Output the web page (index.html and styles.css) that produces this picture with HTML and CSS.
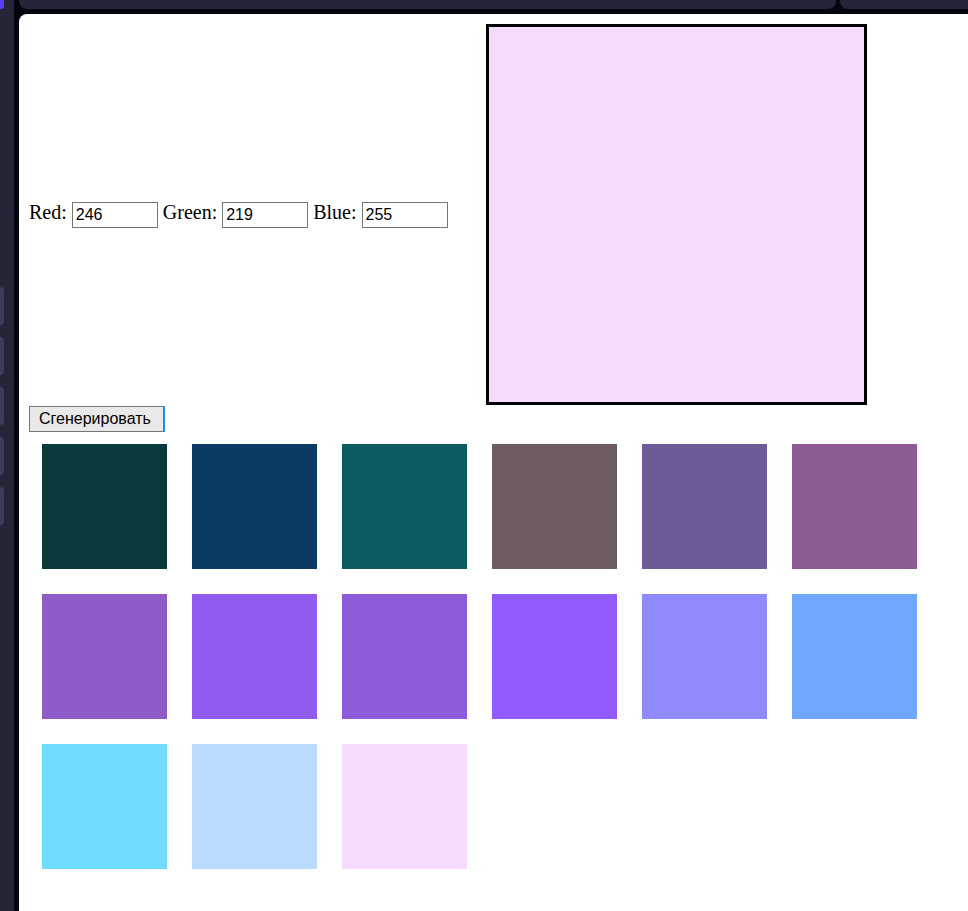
FILE: index.html
```html
<!DOCTYPE html>
<html lang="ru">
<head>
<meta charset="utf-8">
<title>Color generator</title>
<link rel="stylesheet" href="styles.css">
</head>
<body>
<div class="app">
  <aside class="rail">
    <div class="rail-accent"></div>
    <div class="rail-tabs">
      <div class="rail-tab"></div>
      <div class="rail-tab"></div>
      <div class="rail-tab"></div>
      <div class="rail-tab"></div>
      <div class="rail-tab"></div>
    </div>
  </aside>
  <div class="main">
    <div class="topbar">
      <div class="top-tab top-tab-wide"></div>
      <div class="top-tab top-tab-rest"></div>
    </div>
    <div class="panel">
      <div class="row">
        <div class="controls">Red: <input class="field" type="text" value="246"> Green: <input class="field" type="text" value="219"> Blue: <input class="field" type="text" value="255"></div>
        <div class="preview"></div>
      </div>
      <button class="gen" type="button">Сгенерировать</button>
      <div class="swatches">
        <div class="swatch" style="background:#0b3a3a"></div>
        <div class="swatch" style="background:#0b3a62"></div>
        <div class="swatch" style="background:#0b5b60"></div>
        <div class="swatch" style="background:#6e5c63"></div>
        <div class="swatch" style="background:#6d5b97"></div>
        <div class="swatch" style="background:#8d5b93"></div>
        <div class="swatch" style="background:#8e5bc8"></div>
        <div class="swatch" style="background:#915bf0"></div>
        <div class="swatch" style="background:#8e5bda"></div>
        <div class="swatch" style="background:#925bfe"></div>
        <div class="swatch" style="background:#8f8bfe"></div>
        <div class="swatch" style="background:#6fa8fe"></div>
        <div class="swatch" style="background:#6fdbfe"></div>
        <div class="swatch" style="background:#bbdbfe"></div>
        <div class="swatch" style="background:#f6dbff"></div>
      </div>
    </div>
  </div>
</div>
</body>
</html>
```
FILE: styles.css
```css
* { box-sizing: border-box; }
html, body { margin: 0; padding: 0; }
body { background: #03060f; width: 968px; height: 911px; overflow: hidden; }

.app { display: flex; height: 911px; }

.rail {
  width: 14px;
  flex: none;
  background: #232538;
  display: flex;
  flex-direction: column;
}
.rail-accent {
  width: 4px;
  height: 9px;
  background: #5a3df2;
  border-radius: 0 0 3px 0;
}
.rail-tabs {
  display: flex;
  flex-direction: column;
  gap: 12px;
  margin-top: 278px;
}
.rail-tab {
  width: 4px;
  height: 38px;
  background: #3b3d57;
  border-radius: 0 5px 5px 0;
}

.main {
  flex: 1;
  margin-left: 5px;
  display: flex;
  flex-direction: column;
  min-width: 0;
}
.topbar {
  height: 9px;
  display: flex;
  gap: 4px;
  margin-bottom: 5px;
}
.top-tab { background: #232538; border-radius: 0 0 8px 8px; }
.top-tab-wide { width: 817px; }
.top-tab-rest { flex: 1; border-radius: 0 0 0 8px; }

.panel {
  flex: 1;
  background: #ffffff;
  border-radius: 8px 0 0 0;
  padding: 10px 0 0 10px;
  font-family: "Liberation Serif", "Times New Roman", serif;
  font-size: 20px;
  color: #000;
}

.row { display: flex; align-items: center; }
.controls { white-space: nowrap; }
.field {
  width: 86px;
  height: 26px;
  padding: 0 3px;
  border: 1px solid #767676;
  font-family: "Liberation Sans", Arial, sans-serif;
  font-size: 16px;
  color: #000;
  vertical-align: middle;
  background: #fff;
}
.preview {
  width: 381px;
  height: 381px;
  margin-left: 38px;
  border: 3px solid #000;
  background: #f6dbff;
  flex: none;
}

.gen {
  display: block;
  margin: 1px 0 0 0;
  height: 26px;
  padding: 0 12px 0 9px;
  font-family: "Liberation Sans", Arial, sans-serif;
  font-size: 16px;
  color: #000;
  background: #e9e9e9;
  border: 1px solid #767676;
  border-radius: 0;
  box-shadow: 1px 0 0 #1e8fe6;
}

.swatches {
  display: grid;
  grid-template-columns: repeat(6, 125px);
  grid-auto-rows: 125px;
  gap: 25px;
  margin-top: 12px;
  padding-left: 13px;
}
.swatch { width: 125px; height: 125px; }
```
